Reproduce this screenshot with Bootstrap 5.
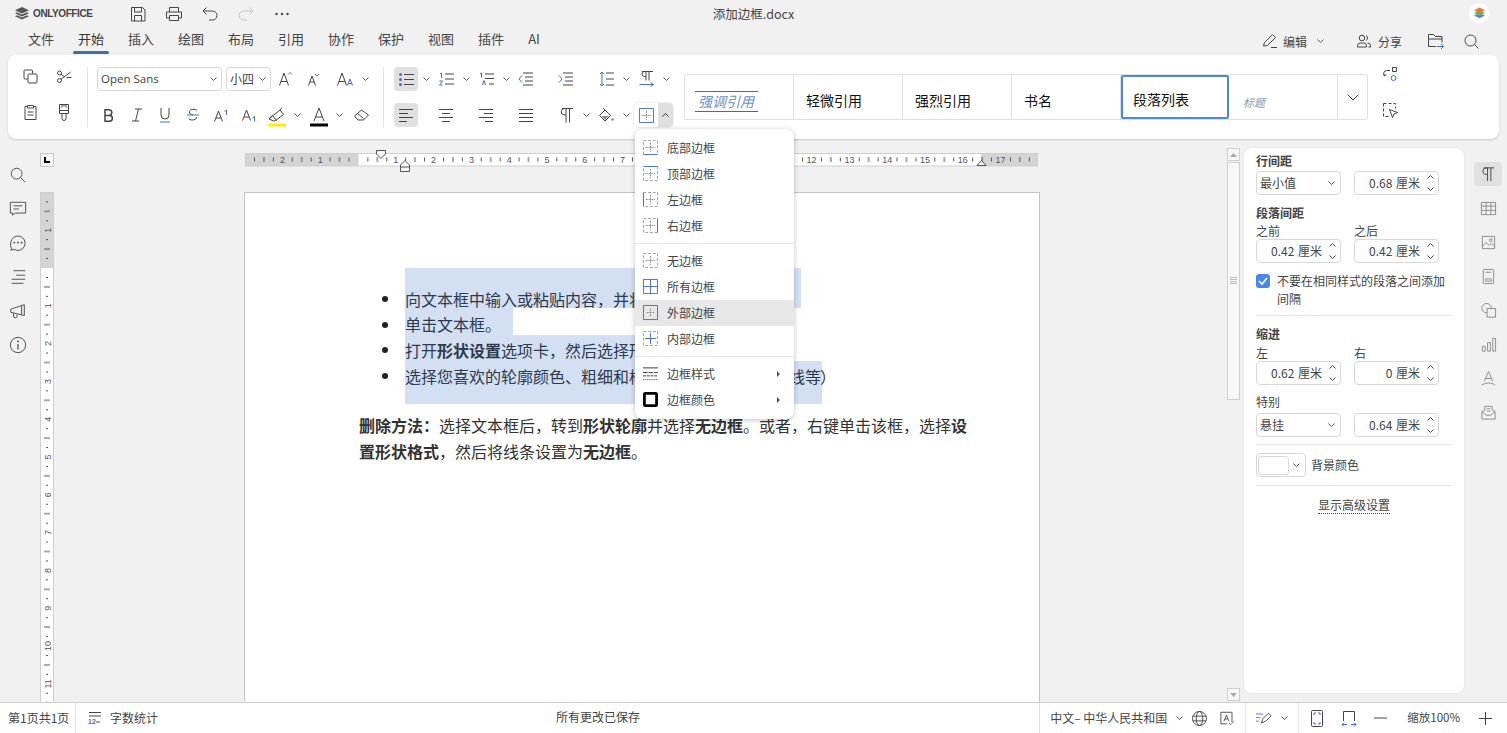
<!DOCTYPE html>
<html lang="zh"><head><meta charset="utf-8"><title>添加边框.docx</title>
<link rel="stylesheet" href="https://cdn.jsdelivr.net/npm/bootstrap@5.3.0/dist/css/bootstrap.min.css">
<style>
html,body{height:100%;margin:0;overflow:hidden}
body{background:#f1f1f1;font-family:"Noto Sans CJK SC","Liberation Sans",sans-serif;font-size:12px;color:#444;width:1507px;height:733px}
svg{display:block;overflow:visible}
.defs-holder{position:absolute;width:0;height:0}
.ic{fill:none;stroke:#444;stroke-width:1;flex:none}
.bl{stroke:#446fc9}
.fb{fill:#446fc9;stroke:none}
.f{fill:#444;stroke:none}
.dash{stroke:#999;stroke-dasharray:3 2;fill:none}
.dash2{stroke:#888;stroke-dasharray:2 1;fill:none}
.gl1{margin-left:1px}.gl5{margin-left:5px}.gl7h{margin-left:7.5px}.gl8h{margin-left:8.5px}.gl9{margin-left:9px}.gl9h{margin-left:9.5px}.gl10{margin-left:10px}.gl10h{margin-left:10.5px}.gl12{margin-left:12px}.gl13{margin-left:13px}.gl16{margin-left:16px}.gl18{margin-left:18px}.gl19{margin-left:19px}.gl20{margin-left:20px}.gl4h{margin-left:4.5px}.gln2{margin-left:-2px}
.shell{height:733px}
.titlebar{height:27px;padding-left:15px}
.brand{font:700 10px "Liberation Sans",sans-serif;letter-spacing:-.4px;color:#444;width:113px;gap:4px}
.qbtns{gap:16px}
.doc-title{left:0;right:0;top:5px;text-align:center;font-size:12.5px;color:#444}
.avatar{width:20px;height:20px;background:#fff;border-radius:50%;right:18px;top:3px}
.redo-ic{stroke:#c4c4c4}
.tabsbar{height:28px;padding-left:16px}
.tabx{width:50px;text-align:center;font-size:13px;color:#444;line-height:24px;height:25px;position:relative}
.tabx.on{color:#333}
.tabx.on::after{content:"";position:absolute;left:7px;right:7px;bottom:-2px;height:3px;background:#446e9b;border-radius:2px}
.tabx.tab-ai{margin-left:-7px}
.right-tools{height:28px;margin-right:28px}
.rbtn{font-size:12px;color:#444}
.rb-edit{gap:5px;margin-right:33px}
.rb-share{gap:7px;margin-right:26px}
.rb-folder{margin-right:20px}
.rb-text{margin-top:2px}
.ribbon{margin:0 8px;height:84px;background:#fff;border-radius:8px;box-shadow:0 1px 2px rgba(0,0,0,.18);padding:9px 0 0 0}
.sep{width:1px;height:60px;background:#e4e4e4;margin-top:3px;flex:none}
.tr{height:30px}
.tr+.tr{margin-top:6px}
.grp1{width:79px;flex:none;padding:0 8px}
.grp1 .tr{gap:6px}
.grp2{width:295px;flex:none;padding-left:9px}
.grp3{width:300px;flex:none;padding-left:10px}
.grp4{flex:none;padding-top:10px;width:684px}
.grp5{flex:none;width:45px;gap:21px;padding-top:3px}
.cell{width:28px;height:24px;display:flex;align-items:center;justify-content:center;border-radius:4px;flex:none}
.cell.c24{width:24px}
.cell.act{background:#e0e0e0}
.carw{width:16px;display:flex;justify-content:center;flex:none}
.car{width:7px;height:4px;fill:none;stroke:#555;stroke-width:1;flex:none}
.fbox{height:24px;border:1px solid #d8d8d8;border-radius:4px;display:flex;align-items:center;justify-content:space-between;padding:0 4px 0 3px;font-size:12px;color:#444}
.fname{width:125px;font-family:"Open Sans",sans-serif;font-size:11.5px;margin-right:4px}
.fsize{width:45px;margin-right:1px}
.bordbtn{height:24px;border-radius:4px;background:#fff;box-shadow:0 0 0 1px #eee}
.bordbtn .c-a{width:24px;border-radius:4px 0 0 4px}
.bordbtn .c-b{width:15px;background:#e0e0e0;border-radius:0 4px 4px 0}
.car-up{stroke:#333}
.fill-in{fill:#8a8a8a;stroke:none}
.gal{height:46px;border:1px solid #e0e0e0;border-right:0;border-radius:2px 0 0 2px;width:654px;background:#fff}
.gi{width:109px;border-right:1px solid #e0e0e0;font-size:14px;color:#111;display:flex;align-items:center;padding-left:12px;padding-top:6px;flex:none}
.gi.g-em{padding-left:10px;padding-top:8px;font-style:italic;color:#6e93c8}
.gi.g-em span{border-top:1px solid #2e74b5;border-bottom:1px solid #2e74b5;line-height:19px;padding:0 2px 0 3px;width:63px;white-space:nowrap}
.gi.sel{border:2px solid #4a87e7;border-radius:2px;padding-left:10px;padding-top:4px;width:108px}
.gi.g-ti{font-style:italic;color:#8a9ab0;font-size:11px;padding-left:14px;padding-top:10px}
.galmore{width:30px;height:46px;border:1px solid #e0e0e0;border-left:0;border-radius:0 3px 3px 0}
.work{height:555px;margin-top:8px}
.lrail{width:41px;gap:16px;padding:19px 5px 0 0}
.lrail .ic{width:18px;height:18px}
.vr-wrap{width:12px}
.tabset{width:14px;height:14px;background:#f7f7f7;border:1px solid #c8c8c8;margin:6px 0 0 -1px;display:flex;align-items:center;justify-content:center}
.tabset i{display:block;width:6px;height:6px;border-left:2px solid #000;border-bottom:2px solid #000}
.vruler{margin-top:26px;background:#fff;box-shadow:0 0 0 1px #cfcfcf}
.canvas{width:1174px;flex:none}
.hr-wrap{margin:6px 0 0 192px;width:793px;height:13px}
.pg{margin:26px 0 0 191px;width:796px;height:510px;background:#fff;border:1px solid #c4c4c4;border-bottom:0;padding:75px 0 0 114px;font-size:16px;color:#333}
.li{line-height:26px;position:relative;white-space:nowrap}
.li::before{content:"";position:absolute;left:23px;width:6px;height:6px;background:#222;border-radius:50%}
.txt{display:block;margin-left:46px;background:#d3dff3;color:#2d3a50;width:396px}
.l1,.l1 .txt{height:40px}.l1::before{top:28px}.l1 .txt{padding-top:18px}
.l2,.l2 .txt{height:27px}.l2::before{top:14px}.l2 .txt{width:108px;padding-top:3px}
.l3,.l3 .txt{height:26px}.l3::before{top:12px}.l3 .txt{width:320px;padding-top:2px}
.l4,.l4 .txt{height:43px}.l4::before{top:12px}.l4 .txt{width:417px;padding-top:2px}
.closep{left:461px;top:2px}
.para{margin-top:8px;width:620px;line-height:26px;color:#333}
.vsb{width:13px;margin-top:1px}
.sb-b{height:13px;background:#f7f7f7;border:1px solid #cfcfcf;display:flex;align-items:center;justify-content:center}
.sb-t{height:238px;margin-top:1px;border:1px solid #cfcfcf;background:#f7f7f7;display:flex;align-items:center;justify-content:center}
.sb-dn{margin-top:auto;margin-bottom:1px}
.panel{width:220px;height:545px;margin:1px 0 0 4px;background:#fff;border-radius:8px;box-shadow:0 0 2px rgba(0,0,0,.1);padding:5px 12px;font-size:12px;color:#444;flex:none}
.plab{font-weight:700;line-height:16px;color:#444}
.psub{line-height:16px;height:16px}
.psub.w85{width:85px}
.field{height:24px;border:1px solid #d8d8d8;border-radius:4px;width:85px;display:flex;align-items:center;flex:none;color:#444}
.field.sp{justify-content:flex-end}
.field .val{margin-right:5px;word-spacing:1px}
.field.sl{justify-content:space-between;padding:0 5px 0 3px}
.sw{display:flex;flex-direction:column;gap:8px;width:10px;margin-right:3px;align-items:center}
.sw .car{stroke:#444}
.prow{gap:13px}
.phr{height:1px;background:#e4e4e4}
.chkrow{gap:7px;line-height:18px}
.chk{width:14px;height:14px;background:#4a87e7;border-radius:3px;flex:none;display:flex;align-items:center;justify-content:center;margin-top:2px}
.p2{margin-top:2px}.p3{margin-top:3px}.p7{margin-top:7px}.p8{margin-top:8px}.p9{margin-top:9px}.p10{margin-top:10px}
.swrow{gap:5px}
.swbox{width:50px;height:24px;border:1px solid #d8d8d8;border-radius:4px;padding:0 4px 0 1px;gap:4px}
.swbox span{width:31px;height:19px;background:#fff;border:1px solid #d8d8d8;border-radius:3px;display:block}
.advlink{border-bottom:1px dotted #444;line-height:16px;display:inline-block}
.rrail{gap:10px;padding:15px 0 0 5px;flex:1}
.rrail .ic{stroke:#8a8a8a;width:17px;height:17px}
.rrail .act .ic{stroke:#444}
.shape-fill{fill:#f1f1f1}
.status{height:31px;background:#fff;border-top:1px solid #cfcfcf;font-size:12px;color:#444}
.pageno{width:75px;padding-left:8px;flex:none}
.wc-ic{margin-left:12px}
.wc-num{font:700 7px "Liberation Sans",sans-serif;fill:#446fc9;stroke:none}
.wc-t{margin-left:7px}
.saved{left:556px;bottom:7px}
.sright{height:30px}
.zoomt{font-size:11.5px}
.plus-ic{margin:0 15px 0 19px}
.sdiv{width:1px;height:30px;background:#e4e4e4;flex:none}
.menu-x{position:absolute;left:635px;top:129px;width:159px;height:290px;background:#fff;border-radius:8px;box-shadow:0 1px 5px rgba(0,0,0,.25);padding:6px 0;z-index:10}
.mi{height:26px;display:flex;align-items:center;padding-left:8px;gap:9px;font-size:12px;color:#444;position:relative}
.mi.hov{background:#e8e8e8}
.mi .ic{width:15px;height:15px;margin-top:-2px}
.mhr{height:1px;background:#e8e8e8;margin:4px 0}
.arr{position:absolute;right:14px;top:10px;width:0;height:0;border-left:3px solid #555;border-top:3px solid transparent;border-bottom:3px solid transparent}
.mk{fill:#f5f5f5;stroke:#555}
.rt{font-family:"Liberation Sans",sans-serif;font-size:9px;fill:#555;text-anchor:middle}
.rstroke{fill:none;stroke:#cfcfcf}
</style></head>
<body>
<svg class="defs-holder">
<defs>
<g id="bd"><path class="dash" d="M.5 .5h15v15H.5z"/><path class="dash2" d="M8 3v10M3 8h10"/></g>
<pattern id="ptk" width="37.8" height="13" patternUnits="userSpaceOnUse"><path d="M9.45 4.500v4M18.900 4v5M28.350 4.500v4" stroke="#555" fill="none"/></pattern>
<pattern id="ptkv" width="12" height="37.8" patternUnits="userSpaceOnUse"><path d="M5 9.45h2M3 18.900h6M5 28.350h2" stroke="#555" fill="none"/></pattern>
<path id="cd" d="M.5 .5L3.500 3.500 6.500 .5"/>
<path id="cu" d="M.5 3.500L3.500 .5 6.500 3.500"/>
</defs>
</svg>
<div class="shell d-flex flex-column position-relative">
 <div class="titlebar d-flex align-items-center position-relative">
  <div class="brand d-flex align-items-center">
   <svg width="14" height="13" viewBox="0 0 14 13"><path d="M7 0l7 3.200L7 6.400 0 3.200z" fill="#555"/><path d="M2 5.200L7 7.600l5-2.400 2 1.100-7 3.200L0 6.300z" fill="#555"/><path d="M2 8.200l5 2.400 5-2.400 2 1.100L7 12.600 0 9.300z" fill="#555"/></svg>
   <span>ONLYOFFICE</span>
  </div>
  <div class="d-flex align-items-center qbtns">
   <svg class="ic" width="20" height="20" viewBox="0 0 20 20"><path d="M3.500 3.500h11l2.500 2.500v11H3.500zM6.500 3.500v4.500h7v-4.500M6.500 17v-5.500h7V17"/></svg>
   <svg class="ic" width="20" height="20" viewBox="0 0 20 20"><path d="M5.500 8V3.500h9V8M5.500 14H2.500V8h15v6h-3M5.500 11.500h9v5h-9z"/></svg>
   <svg class="ic" width="20" height="20" viewBox="0 0 20 20"><path d="M6.500 3.500L3 7l3.500 3.500M3 7h9.500a4.500 4.500 0 0 1 0 9H9"/></svg>
   <svg class="ic redo-ic" width="20" height="20" viewBox="0 0 20 20"><path d="M13.500 3.500L17 7l-3.500 3.500M17 7H7.500a4.500 4.500 0 0 0 0 9H11"/></svg>
   <svg class="ic" width="20" height="20" viewBox="0 0 20 20"><circle class="f" cx="4.500" cy="10" r="1.200"/><circle class="f" cx="10" cy="10" r="1.200"/><circle class="f" cx="15.500" cy="10" r="1.200"/></svg>
  </div>
  <div class="doc-title position-absolute">添加边框.docx</div>
  <div class="avatar position-absolute d-flex align-items-center justify-content-center">
   <svg width="11" height="12" viewBox="0 0 11 12"><path d="M5.500 6L0 8.500l5.500 2.800L11 8.500z" fill="#4a87e7"/><path d="M5.500 3.500L0 6l5.500 2.800L11 6z" fill="#6cb54e"/><path d="M5.500 .6L0 3.200l5.500 2.800L11 3.200z" fill="#e9773c"/></svg>
  </div>
 </div>
 <div class="tabsbar d-flex align-items-start position-relative">
  <div class="tabx">文件</div><div class="tabx on">开始</div><div class="tabx">插入</div><div class="tabx">绘图</div><div class="tabx">布局</div><div class="tabx">引用</div><div class="tabx">协作</div><div class="tabx">保护</div><div class="tabx">视图</div><div class="tabx">插件</div><div class="tabx tab-ai">AI</div>
  <div class="ms-auto d-flex align-items-center right-tools">
   <div class="rbtn rb-edit d-flex align-items-center">
    <svg class="ic" width="16" height="16" viewBox="0 0 16 16"><path d="M1.500 13l1-3.500L10.500 1.500l3 3-8 8-4 .5zM9 14.500h6"/></svg><span class="rb-text">编辑</span>
    <svg class="car gl5" viewBox="0 0 7 4"><use href="#cd"/></svg>
   </div>
   <div class="rbtn rb-share d-flex align-items-center">
    <svg class="ic" width="14" height="14" viewBox="0 0 14 14"><circle cx="5" cy="4" r="2.800"/><path d="M.5 13v-1.500A2.800 2.800 0 0 1 3.300 9h3.400a2.800 2.800 0 0 1 2.800 2.500V13zM9 1.500a2.800 2.800 0 0 1 0 5M10.500 9a2.800 2.800 0 0 1 3 2.500V13h-2"/></svg><span class="rb-text">分享</span>
   </div>
   <svg class="ic rb-folder" width="16" height="16" viewBox="0 0 16 16"><path d="M8 13.500H.5V1.500h5l2 2h6.500v6M.5 6h13.500"/><path class="bl" d="M9 13.500h6.500M13 11l2.500 2.500L13 16"/></svg>
   <svg class="ic" width="15" height="15" viewBox="0 0 15 15"><circle cx="6.500" cy="6.500" r="5.500"/><path d="M10.500 10.500l4 4"/></svg>
  </div>
 </div>
 <div class="ribbon d-flex">
  <div class="grp1 d-flex flex-column">
   <div class="tr d-flex">
    <div class="cell"><svg class="ic" width="15" height="15" viewBox="0 0 15 15"><path d="M4.500 10H2a1 1 0 0 1-1-1V2a1 1 0 0 1 1-1h6.500a1 1 0 0 1 1 1v2.500"/><rect x="5" y="5" width="9" height="9" rx="1"/></svg></div>
    <div class="cell"><svg class="ic" width="16" height="15" viewBox="0 0 16 15"><circle cx="3.500" cy="4" r="2"/><circle cx="3.500" cy="11.500" r="2"/><path d="M5 5.300L9 8M5 10.200L14.500 3M10.500 8.500h5"/></svg></div>
   </div>
   <div class="tr d-flex">
    <div class="cell"><svg class="ic" width="13" height="15" viewBox="0 0 13 15"><path d="M3.500 1.500H1v13h11v-13H9.500M3.500 .5h6v2.500h-6zM3.500 7h6M3.500 10h6"/></svg></div>
    <div class="cell"><svg class="ic" width="10" height="17" viewBox="0 0 10 17"><path d="M.5 .5h9v9h-9zM.5 6.500h9M3 .5v3M5 .5v2M7 .5v3M3 9.500v5a2 2 0 0 0 4 0v-5"/></svg></div>
   </div>
  </div>
  <div class="sep"></div>
  <div class="grp2 d-flex flex-column">
   <div class="tr d-flex align-items-center">
    <div class="fbox fname"><span>Open Sans</span><svg class="car" viewBox="0 0 7 4"><use href="#cd"/></svg></div>
    <div class="fbox fsize"><span>小四</span><svg class="car" viewBox="0 0 7 4"><use href="#cd"/></svg></div>
    <div class="cell"><svg class="ic" width="14" height="14" viewBox="0 0 14 14"><path d="M.5 13.500L5 1l4.500 12.500M2 9.500h6"/><path class="bl" d="M9 2.500l2-2 2 2"/></svg></div>
    <div class="cell"><svg class="ic" width="12" height="13" viewBox="0 0 12 13"><path d="M.5 12.500L4 3l3.500 9.500M1.800 9h4.400"/><path class="bl" d="M7 1l2 2 2-2"/></svg></div>
    <svg class="ic gl9" width="17" height="14" viewBox="0 0 17 14"><path d="M.5 13.500L5 1l4.500 12.500M2 9.500h6"/><path class="bl" d="M10.500 13.500l2.500-6.500 2.500 6.500M11.300 11.500h3.400"/></svg>
    <svg class="car gl7h" viewBox="0 0 7 4"><use href="#cd"/></svg>
   </div>
   <div class="tr d-flex align-items-center">
    <div class="cell gln2"><svg class="ic" width="10" height="13" viewBox="0 0 10 13"><path d="M1 .8h4a2.800 2.800 0 0 1 0 5.600H1zM1 6.400h4.500a2.900 2.900 0 0 1 0 5.800H1z" stroke-width="1.500"/></svg></div>
    <div class="cell"><svg class="ic" width="12" height="14" viewBox="0 0 12 14"><path d="M4 1h7M1 13h7M7.500 1L4.500 13"/></svg></div>
    <div class="cell"><svg class="ic" width="12" height="16" viewBox="0 0 12 16"><path d="M2 1v7a4 4 0 0 0 8 0V1"/><path class="bl" d="M1 15h10"/></svg></div>
    <div class="cell"><svg class="ic" width="14" height="14" viewBox="0 0 14 14"><path d="M11 2.500C9.500.8 4 .8 3.500 3.500S5 6 7 7M10.500 9c.5 2.800-5 4-7.500 2"/><path class="bl" d="M1 7h12"/></svg></div>
    <div class="cell"><svg class="ic" width="14" height="13" viewBox="0 0 14 13"><path d="M.5 12.500L4.500 2l4 10.500M2 9h5"/><path class="bl" d="M10.500 2.500l2-1.500v5"/></svg></div>
    <div class="cell"><svg class="ic" width="14" height="13" viewBox="0 0 14 13"><path d="M.5 11.500L4.500 1l4 10.500M2 8h5"/><path class="bl" d="M10.500 9l2-1.500v5"/></svg></div>
    <svg class="ic gl5" width="18" height="19" viewBox="0 0 18 19"><path d="M1 13l4.500 2 2-.5 8-6-3.500-4.500-7.500 6zM4.500 9.500l4 5M1 13l3-3.500M12 4l2-2.500"/><path d="M0 19h18" stroke="#ffee00" stroke-width="3"/></svg>
    <svg class="car gl7h" viewBox="0 0 7 4"><use href="#cd"/></svg>
    <svg class="ic gl9h" width="18" height="19" viewBox="0 0 18 19"><path d="M4 15L9 2l5 13M5.500 11h7"/><path d="M0 19h18" stroke="#000" stroke-width="3"/></svg>
    <svg class="car gl7h" viewBox="0 0 7 4"><use href="#cd"/></svg>
    <div class="cell gl4h"><svg class="ic" width="15" height="12" viewBox="0 0 15 12"><path d="M.5 7l7-6 7 5-5 5H4zM3.500 4.500l6 5"/></svg></div>
   </div>
  </div>
  <div class="sep"></div>
  <div class="grp3 d-flex flex-column">
   <div class="tr d-flex align-items-center">
    <div class="cell c24 act"><svg class="ic" width="15" height="13" viewBox="0 0 15 13"><circle class="fb" cx="1.500" cy="1.500" r="1.500"/><circle class="fb" cx="1.500" cy="6.500" r="1.500"/><circle class="fb" cx="1.500" cy="11.500" r="1.500"/><path d="M5 1.500h10M5 6.500h10M5 11.500h10"/></svg></div>
    <div class="carw"><svg class="car" viewBox="0 0 7 4"><use href="#cd"/></svg></div>
    <div class="cell c24"><svg class="ic" width="15" height="14" viewBox="0 0 15 14"><path class="bl" d="M1 2l1.500-1v5M.5 9h3l-3 4h3"/><path d="M6 2h9M6 7h9M6 12h9"/></svg></div>
    <div class="carw"><svg class="car" viewBox="0 0 7 4"><use href="#cd"/></svg></div>
    <div class="cell c24"><svg class="ic" width="15" height="14" viewBox="0 0 15 14"><path class="bl" d="M1 2l1.500-1v4.500M3.500 13L5 8.500 6.500 13"/><path d="M6 2h9M6 6.500h9M10 12h5"/></svg></div>
    <div class="carw"><svg class="car" viewBox="0 0 7 4"><use href="#cd"/></svg></div>
    <div class="cell c24"><svg class="ic" width="16" height="14" viewBox="0 0 16 14"><path class="bl" d="M4 3.500L1 7l3 3.500"/><path d="M5 1h10M7 5h8M7 9h8M5 13h10"/></svg></div>
    <div class="cell c24 gl16"><svg class="ic" width="16" height="14" viewBox="0 0 16 14"><path class="bl" d="M1 3.500L4 7l-3 3.500"/><path d="M5 1h10M7 5h8M7 9h8M5 13h10"/></svg></div>
    <div class="cell c24 gl16"><svg class="ic" width="15" height="16" viewBox="0 0 15 16"><path class="bl" d="M3 1v14M1 3l2-2 2 2M1 13l2 2 2-2"/><path d="M7 2h8M7 8h8M7 14h8"/></svg></div>
    <div class="carw"><svg class="car" viewBox="0 0 7 4"><use href="#cd"/></svg></div>
    <div class="cell c24"><svg class="ic" width="15" height="16" viewBox="0 0 15 16"><path d="M3 .5h11M7 .5v9M10 .5v9M7 .5H5.500a2.500 2.500 0 0 0 0 5H7"/><path class="bl" d="M.5 13.500h14M11.500 11.500l3 2-3 2"/></svg></div>
    <div class="carw"><svg class="car" viewBox="0 0 7 4"><use href="#cd"/></svg></div>
   </div>
   <div class="tr d-flex align-items-center">
    <div class="cell c24 act"><svg class="ic" width="14" height="13" viewBox="0 0 14 13"><path d="M0 .5h14M0 4.500h9M0 8.500h14M0 12.500h8"/></svg></div>
    <div class="cell c24 gl16"><svg class="ic" width="14" height="13" viewBox="0 0 14 13"><path d="M0 .5h14M3 4.500h8M0 8.500h14M3 12.500h8"/></svg></div>
    <div class="cell c24 gl16"><svg class="ic" width="14" height="13" viewBox="0 0 14 13"><path d="M0 .5h14M5 4.500h9M0 8.500h14M6 12.500h8"/></svg></div>
    <div class="cell c24 gl16"><svg class="ic" width="14" height="13" viewBox="0 0 14 13"><path d="M0 .5h14M0 4.500h14M0 8.500h14M0 12.500h14"/></svg></div>
    <div class="cell c24 gl16"><svg class="ic" width="13" height="15" viewBox="0 0 13 15"><path d="M2 .5h11M6 .5v14M9.500 .5v14M6 .5H4.500a3 3 0 0 0 0 6.500H6"/></svg></div>
    <div class="carw"><svg class="car" viewBox="0 0 7 4"><use href="#cd"/></svg></div>
    <div class="cell c24"><svg class="ic" width="15" height="15" viewBox="0 0 15 15"><path d="M.5 7.500L6 2l5.500 5.500L6 13z"/><path class="fill-in" d="M2.500 8h7L6 12z"/><path d="M6 2L4 0"/><circle class="fill-in" cx="13.500" cy="11.500" r="1.300"/></svg></div>
    <div class="carw"><svg class="car" viewBox="0 0 7 4"><use href="#cd"/></svg></div>
    <div class="bordbtn d-flex">
     <div class="cell c-a"><svg class="ic" width="15" height="15" viewBox="0 0 16 16"><path class="bl" d="M.5 .5h15v15H.5z"/><path class="dash2" d="M8 3v10M3 8h10"/></svg></div>
     <div class="cell c-b"><svg class="car car-up" viewBox="0 0 7 4"><use href="#cu"/></svg></div>
    </div>
   </div>
  </div>
  <div class="grp4 d-flex">
    <div class="gal d-flex">
     <div class="gi g-em"><span>强调引用</span></div>
     <div class="gi">轻微引用</div><div class="gi">强烈引用</div><div class="gi">书名</div>
     <div class="gi sel">段落列表</div>
     <div class="gi g-ti">标题</div>
    </div>
    <div class="galmore d-flex align-items-center justify-content-center"><svg class="ic" width="12" height="7" viewBox="0 0 12 7"><path d="M.5 .5L6 6l5.500-5.500"/></svg></div>
  </div>
  <div class="grp5 d-flex flex-column align-items-center">
   <svg class="ic" width="15" height="15" viewBox="0 0 15 15"><path d="M7 3.500H3.500a3 3 0 0 0-2 5M.5 7l1 2 2-1.500M9.500 .5h4v4h-4z"/><circle class="bl" cx="10.500" cy="11" r="2.500"/></svg>
   <svg class="ic" width="15" height="15" viewBox="0 0 15 15"><path d="M.5 .5h12v5M.5 .5v13h5" stroke-dasharray="3 2"/><path d="M6.500 6.500l8 3-3.500 1.500-1.500 3.500z"/></svg>
  </div>
 </div>
 <div class="work d-flex">
  <div class="lrail d-flex flex-column align-items-center">
   <svg class="ic" viewBox="0 0 20 20"><circle cx="8.500" cy="8.500" r="6"/><path d="M13 13l5 5"/></svg>
   <svg class="ic" viewBox="0 0 20 20"><path d="M1.500 2.500h17v12H6.500L4 17v-2.500H1.500zM5 6.500h10M5 10h6"/></svg>
   <svg class="ic" viewBox="0 0 20 20"><path d="M3 16.500L1.800 18l4-.9A8 8 0 1 0 2 9.500a8 8 0 0 0 1 7z"/><circle class="f" cx="6" cy="9.500" r="1"/><circle class="f" cx="10" cy="9.500" r="1"/><circle class="f" cx="14" cy="9.500" r="1"/></svg>
   <svg class="ic" viewBox="0 0 20 20"><path d="M5 3h13M8 8h10M3 12.500h15M3 17h13"/></svg>
   <svg class="ic" viewBox="0 0 20 20"><path d="M2 8l15-5v12L2 11.500zM14 4v10.500M5 12.500v3a2 2 0 0 0 4 0V14"/></svg>
   <svg class="ic" viewBox="0 0 20 20"><circle cx="10" cy="10" r="8.500"/><path d="M10 9v6" stroke-width="1.300"/><circle class="f" cx="10" cy="6" r="1"/></svg>
  </div>
  <div class="vr-wrap d-flex flex-column">
   <div class="tabset"><i></i></div>
   <svg class="vruler" width="12" height="509" viewBox="0 0 12 509">
    <rect width="12" height="75" fill="#d4d4d4"/>
    <g transform="translate(0,-.6)">
    <rect width="12" height="510" fill="url(#ptkv)"/>
    <text class="rt" transform="translate(9.500,37.800) rotate(-90)">1</text>
    <text class="rt" transform="translate(9.500,113.400) rotate(-90)">1</text><text class="rt" transform="translate(9.500,151.200) rotate(-90)">2</text><text class="rt" transform="translate(9.500,189) rotate(-90)">3</text><text class="rt" transform="translate(9.500,226.800) rotate(-90)">4</text><text class="rt" transform="translate(9.500,264.600) rotate(-90)">5</text><text class="rt" transform="translate(9.500,302.400) rotate(-90)">6</text><text class="rt" transform="translate(9.500,340.200) rotate(-90)">7</text><text class="rt" transform="translate(9.500,378) rotate(-90)">8</text><text class="rt" transform="translate(9.500,415.800) rotate(-90)">9</text><text class="rt" transform="translate(9.500,453.600) rotate(-90)">10</text><text class="rt" transform="translate(9.500,491.400) rotate(-90)">11</text>
    </g>
   </svg>
  </div>
  <div class="canvas">
   <div class="hr-wrap">
    <svg width="793" height="13" viewBox="0 0 793 13">
     <rect width="793" height="13" fill="#fff"/>
     <rect width="113.500" height="13" fill="#d4d4d4"/><rect x="736" width="57" height="13" fill="#d4d4d4"/>
     <rect width="793" height="13" fill="url(#ptk)"/>
     <rect x=".5" y=".5" width="792" height="12.500" class="rstroke"/>
     <text class="rt" x="37.400" y="10">2</text><text class="rt" x="75.200" y="10">1</text><text class="rt" x="150.800" y="10">1</text><text class="rt" x="188.600" y="10">2</text><text class="rt" x="226.400" y="10">3</text><text class="rt" x="264.200" y="10">4</text><text class="rt" x="302" y="10">5</text><text class="rt" x="339.800" y="10">6</text><text class="rt" x="377.600" y="10">7</text><text class="rt" x="566.600" y="10">12</text><text class="rt" x="604.400" y="10">13</text><text class="rt" x="642.200" y="10">14</text><text class="rt" x="680" y="10">15</text><text class="rt" x="717.800" y="10">16</text><text class="rt" x="755.600" y="10">17</text>
     <path class="mk" d="M131.500 -2.500h9v3.500l-4.500 4.500-4.500-4.500z"/>
     <path class="mk" d="M155.500 12L160 7.500l4.500 4.500v6.500h-9zM155.500 14h9"/>
     <path class="mk" d="M732 12.500l4.500-5 4.500 5z"/>
    </svg>
   </div>
   <div class="pg">
    <div class="li l1"><span class="txt">向文本框中输入或粘贴内容，并将其放置在所需位置。</span></div>
    <div class="li l2"><span class="txt">单击文本框。</span></div>
    <div class="li l3"><span class="txt">打开<b>形状设置</b>选项卡，然后选择形状轮廓。</span></div>
    <div class="li l4"><span class="txt">选择您喜欢的轮廓颜色、粗细和样式（实线、虚线、点线等</span><span class="position-absolute closep">）</span></div>
    <div class="para"><b>删除方法：</b>选择文本框后，转到<b>形状轮廓</b>并选择<b>无边框</b>。或者，右键单击该框，选择<b>设置形状格式</b>，然后将线条设置为<b>无边框</b>。</div>
   </div>
  </div>
  <div class="vsb d-flex flex-column">
   <div class="sb-b"><svg width="7" height="4" viewBox="0 0 7 4"><path d="M3.500 0L7 4H0z" fill="#aaa"/></svg></div>
   <div class="sb-t"><svg width="7" height="8" viewBox="0 0 7 8"><path d="M0 .5h7M0 2.500h7M0 4.500h7M0 6.500h7" stroke="#bbb"/></svg></div>
   <div class="sb-b sb-dn"><svg width="7" height="4" viewBox="0 0 7 4"><path d="M3.500 4L7 0H0z" fill="#aaa"/></svg></div>
  </div>
  <div class="panel d-flex flex-column">
   <div class="plab">行间距</div>
   <div class="d-flex prow p2">
    <div class="field sl"><span>最小值</span><svg class="car" viewBox="0 0 7 4"><use href="#cd"/></svg></div>
    <div class="field sp"><span class="val">0.68 厘米</span><span class="sw"><svg class="car" viewBox="0 0 7 4"><use href="#cu"/></svg><svg class="car" viewBox="0 0 7 4"><use href="#cd"/></svg></span></div>
   </div>
   <div class="plab p10">段落间距</div>
   <div class="d-flex prow p2">
    <div class="psub w85">之前</div><div class="psub">之后</div>
   </div>
   <div class="d-flex prow">
    <div class="field sp"><span class="val">0.42 厘米</span><span class="sw"><svg class="car" viewBox="0 0 7 4"><use href="#cu"/></svg><svg class="car" viewBox="0 0 7 4"><use href="#cd"/></svg></span></div>
    <div class="field sp"><span class="val">0.42 厘米</span><span class="sw"><svg class="car" viewBox="0 0 7 4"><use href="#cu"/></svg><svg class="car" viewBox="0 0 7 4"><use href="#cd"/></svg></span></div>
   </div>
   <div class="d-flex chkrow p9">
    <div class="chk"><svg width="10" height="8" viewBox="0 0 10 8"><path d="M1 4l3 3 5-6" fill="none" stroke="#fff" stroke-width="1.600"/></svg></div>
    <div>不要在相同样式的段落之间添加间隔</div>
   </div>
   <div class="phr p7"></div>
   <div class="plab p10">缩进</div>
   <div class="d-flex prow p3">
    <div class="psub w85">左</div><div class="psub">右</div>
   </div>
   <div class="d-flex prow">
    <div class="field sp"><span class="val">0.62 厘米</span><span class="sw"><svg class="car" viewBox="0 0 7 4"><use href="#cu"/></svg><svg class="car" viewBox="0 0 7 4"><use href="#cd"/></svg></span></div>
    <div class="field sp"><span class="val">0 厘米</span><span class="sw"><svg class="car" viewBox="0 0 7 4"><use href="#cu"/></svg><svg class="car" viewBox="0 0 7 4"><use href="#cd"/></svg></span></div>
   </div>
   <div class="psub p9">特别</div>
   <div class="d-flex prow p3">
    <div class="field sl"><span>悬挂</span><svg class="car" viewBox="0 0 7 4"><use href="#cd"/></svg></div>
    <div class="field sp"><span class="val">0.64 厘米</span><span class="sw"><svg class="car" viewBox="0 0 7 4"><use href="#cu"/></svg><svg class="car" viewBox="0 0 7 4"><use href="#cd"/></svg></span></div>
   </div>
   <div class="phr p7"></div>
   <div class="d-flex align-items-center swrow p8">
    <div class="d-flex align-items-center swbox"><span></span><svg class="car" viewBox="0 0 7 4"><use href="#cd"/></svg></div>
    <span>背景颜色</span>
   </div>
   <div class="phr p8"></div>
   <div class="text-center p10"><span class="advlink">显示高级设置</span></div>
  </div>
  <div class="rrail d-flex flex-column align-items-center">
   <div class="cell act"><svg class="ic" viewBox="0 0 18 18"><path d="M4 2h11M8 2v14M11.500 2v14M8 2H6.500a3.500 3.500 0 0 0 0 7H8"/></svg></div>
   <div class="cell"><svg class="ic" viewBox="0 0 18 18"><path d="M1.500 2.500h15v13h-15zM1.500 6.500h15M1.500 11h15M6.500 2.500v13M11.500 2.500v13"/></svg></div>
   <div class="cell"><svg class="ic" viewBox="0 0 18 18"><path d="M2.500 2.500h13v13h-13zM2.500 13l4-4 3 3 2.500-2 3.500 3"/><circle cx="11.500" cy="6.500" r="1.500"/></svg></div>
   <div class="cell"><svg class="ic" viewBox="0 0 18 18"><rect x="3.500" y="1.500" width="11" height="15" rx="1"/><path d="M6 4.500h6M6 11.500h6v2.500H6z"/></svg></div>
   <div class="cell"><svg class="ic" viewBox="0 0 18 18"><circle cx="7" cy="6.500" r="5"/><rect class="shape-fill" x="7.500" y="7" width="9" height="9"/></svg></div>
   <div class="cell"><svg class="ic" viewBox="0 0 18 18"><path d="M2.500 11h3v5h-3zM8 7h3v9H8zM13.500 2.500h3V16h-3z"/></svg></div>
   <div class="cell"><svg class="ic" viewBox="0 0 18 18"><path d="M4.500 12L9 1.500 13.500 12M6 9h6M2 16c4-3 10-3 14 0"/></svg></div>
   <div class="cell"><svg class="ic" viewBox="0 0 18 18"><path d="M2 8l3-1.500V2.500h8v4L16 8v8H2zM2 8l5 4h4l5-4M7 5h4M7 7.500h4"/></svg></div>
  </div>
 </div>
 <div class="status d-flex align-items-center">
  <div class="pageno">第1页共1页</div>
  <div class="sdiv"></div>
  <svg class="ic wc-ic" width="15" height="14" viewBox="0 0 15 14"><path d="M1 1.500h12M1 5h12M8 11h4"/><text class="wc-num" x="0" y="13">12</text></svg>
  <span class="wc-t">字数统计</span>
  <span class="position-absolute saved">所有更改已保存</span>
  <div class="ms-auto d-flex align-items-center sright">
   <div class="sdiv"></div>
   <span class="gl10">中文– 中华人民共和国</span>
   <svg class="car gl8h" viewBox="0 0 7 4"><use href="#cd"/></svg>
   <svg class="ic gl9h" width="15" height="15" viewBox="0 0 16 16"><circle cx="8" cy="8" r="7.500"/><ellipse cx="8" cy="8" rx="3.500" ry="7.500"/><path d="M1 5.500h14M1 10.500h14"/></svg>
   <svg class="ic gl13" width="16" height="15" viewBox="0 0 18 16"><path d="M13.500 12V1H1v13h7"/><path d="M4.500 11L7.250 4 10 11M5.500 8.500h3.500"/><path class="bl" d="M10 13l2 2 4-4"/></svg>
   <div class="sdiv gl9"></div>
   <svg class="ic gl10" width="16" height="13" viewBox="0 0 18 14"><path class="bl" d="M0 2h8M0 6h5M0 10h3"/><path d="M6 12l2-5 6-6 3 3-6 6z"/></svg>
   <svg class="car gl8h" viewBox="0 0 7 4"><use href="#cd"/></svg>
   <div class="sdiv gl10h"></div>
   <svg class="ic gl12" width="12" height="17" viewBox="0 0 12 17"><rect x=".5" y=".5" width="11" height="16" rx="1"/><path class="bl" d="M3 5V3h2M9 5V3H7M3 12v2h2M9 12v2H7"/></svg>
   <svg class="ic gl19" width="14" height="17" viewBox="0 0 14 17"><path d="M1.500 11V1.500h11V11"/><path class="bl" d="M0 14.500h5M0 14.500l2-2M0 14.500l2 2M14 14.500H9M14 14.500l-2-2M14 14.500l-2 2"/></svg>
   <svg class="ic gl18" width="13" height="2" viewBox="0 0 13 2"><path d="M0 1h13"/></svg>
   <span class="gl20 zoomt">缩放100%</span>
   <svg class="ic plus-ic" width="13" height="13" viewBox="0 0 13 13"><path d="M0 6.500h13M6.500 0v13"/></svg>
  </div>
 </div>
 <div class="menu-x">
  <div class="mi"><svg class="ic" viewBox="0 0 16 16"><use href="#bd"/><path class="bl" d="M.5 15.500h15"/></svg><span>底部边框</span></div>
  <div class="mi"><svg class="ic" viewBox="0 0 16 16"><use href="#bd"/><path class="bl" d="M.5 .5h15"/></svg><span>顶部边框</span></div>
  <div class="mi"><svg class="ic" viewBox="0 0 16 16"><use href="#bd"/><path class="bl" d="M.5 .5v15"/></svg><span>左边框</span></div>
  <div class="mi"><svg class="ic" viewBox="0 0 16 16"><use href="#bd"/><path class="bl" d="M15.500 .5v15"/></svg><span>右边框</span></div>
  <div class="mhr"></div>
  <div class="mi"><svg class="ic" viewBox="0 0 16 16"><use href="#bd"/></svg><span>无边框</span></div>
  <div class="mi"><svg class="ic" viewBox="0 0 16 16"><path class="bl" d="M.5 .5h15v15H.5zM8 .5v15M.5 8h15"/></svg><span>所有边框</span></div>
  <div class="mi hov"><svg class="ic" viewBox="0 0 16 16"><path class="bl" d="M.5 .5h15v15H.5z"/><path class="dash2" d="M8 4v8M4 8h8"/></svg><span>外部边框</span></div>
  <div class="mi"><svg class="ic" viewBox="0 0 16 16"><path class="dash" d="M.5 .5h15v15H.5z"/><path class="bl" d="M8 2v12M2 8h12"/></svg><span>内部边框</span></div>
  <div class="mhr"></div>
  <div class="mi"><svg class="ic" viewBox="0 0 16 16"><path d="M0 2h16" stroke="#333"/><path d="M0 7h16" stroke="#333" stroke-dasharray="5 1"/><path d="M0 10.500h16" stroke="#333" stroke-dasharray="3 1"/><path d="M0 14.500h16" stroke="#333" stroke-dasharray="1 1"/></svg><span>边框样式</span><i class="arr"></i></div>
  <div class="mi"><svg class="ic" viewBox="0 0 16 16"><rect x="1.500" y="1.500" width="13" height="13" rx="1" stroke="#000" stroke-width="3"/></svg><span>边框颜色</span><i class="arr"></i></div>
 </div>
</div>
<script src="https://cdn.jsdelivr.net/npm/bootstrap@5.3.0/dist/js/bootstrap.bundle.min.js"></script>
</body></html>
